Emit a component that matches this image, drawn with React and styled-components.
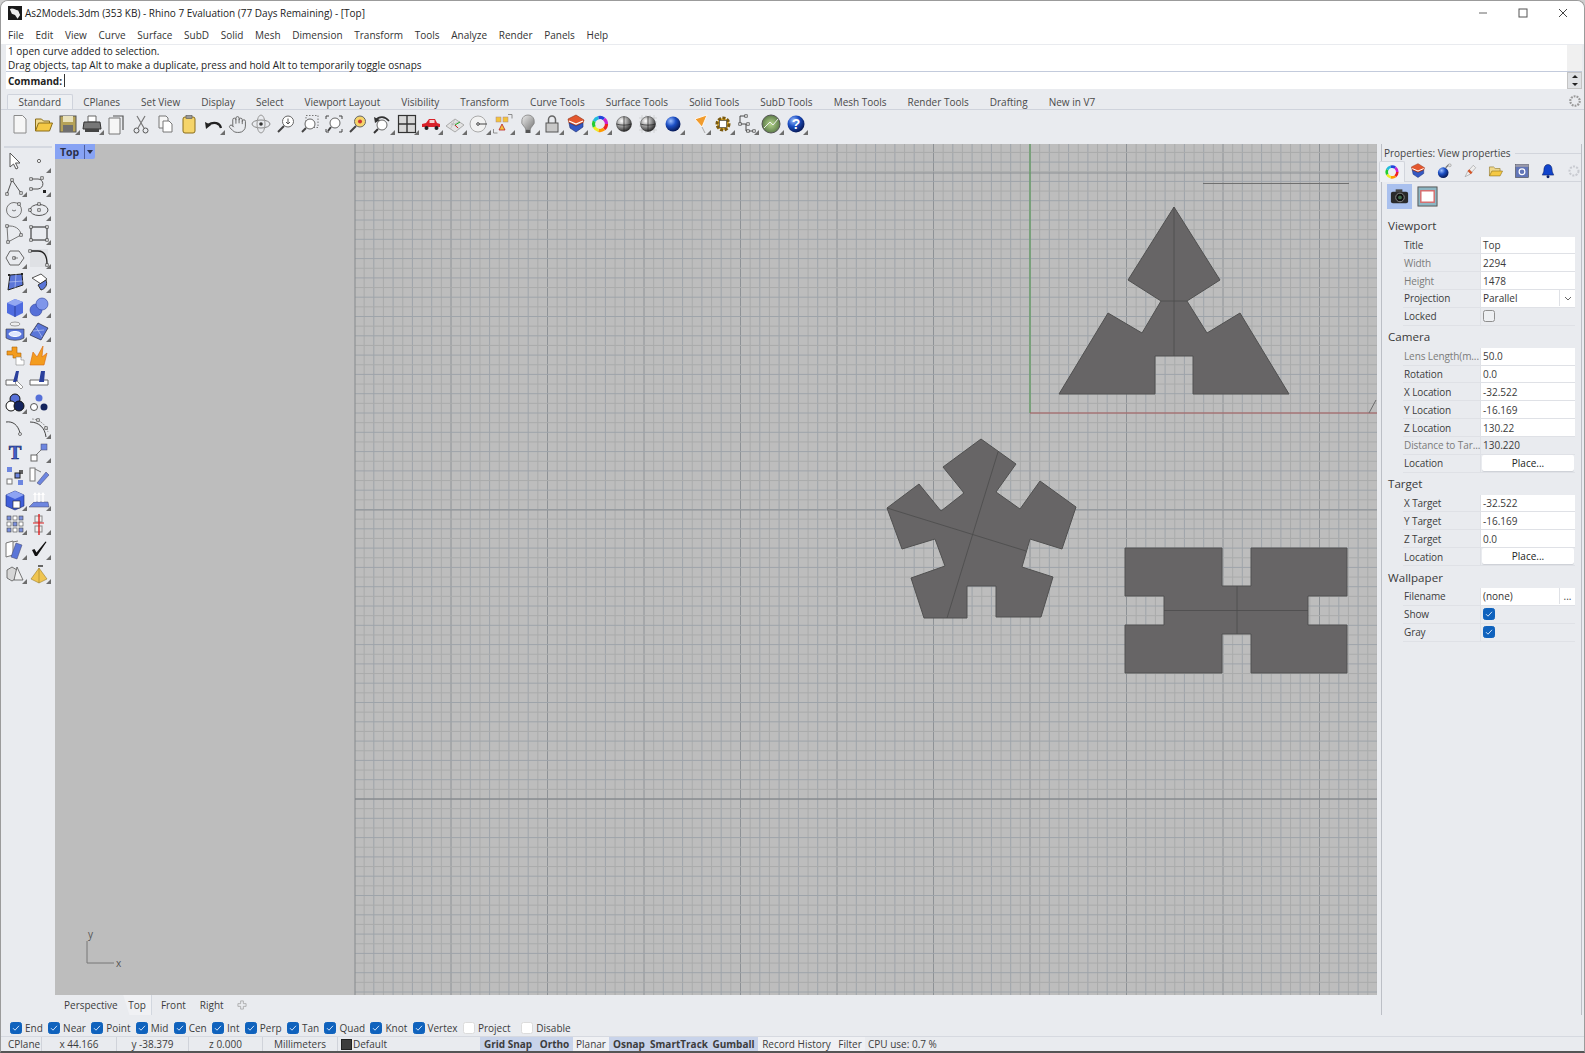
import React from 'react';
import styled, { createGlobalStyle } from 'styled-components';
import { Hand } from 'lucide-react';

const FONT = `"Open Sans", "Noto Sans", sans-serif`;

const Global = createGlobalStyle`
  html, body { margin: 0; padding: 0; background: #cfcfcf; overflow: hidden; }
  * { box-sizing: border-box; }
`;

const Window = styled.div`
  width: 1585px;
  height: 1053px;
  display: flex;
  flex-direction: column;
  background: #e9ebef;
  border: 1px solid #9b9b9b;
  border-bottom: 2px solid #555;
  border-top-right-radius: 8px;
  border-top-left-radius: 8px;
  overflow: hidden;
  font-family: ${FONT};
  font-size: 10px;
  color: #333;
`;

/* title + menu */
const TitleBar = styled.div`
  height: 25px;
  background: #fff;
  display: flex;
  align-items: center;
  padding: 0 0 2px 7px;
  gap: 3px;
  font-size: 10px;
  color: #222;
`;
const WinButtons = styled.div`
  margin-left: auto;
  display: flex;
  align-items: center;
  margin-right: 1px;
`;
const WinButton = styled.div`
  width: 40px;
  height: 23px;
  display: flex;
  align-items: center;
  justify-content: center;
`;
const MenuBar = styled.div`
  height: 18px;
  background: #fff;
  display: flex;
  align-items: center;
  padding-left: 7px;
  gap: 11.7px;
`;

/* command area */
const CommandArea = styled.div`
  margin-left: 5px;
  margin-top: 1px;
  display: grid;
  grid-template-columns: 1fr 15px;
  width: 1576px;
`;
const History = styled.div`
  height: 27px;
  background: #fff;
  border-bottom: 1px solid #c3cbdc;
  padding-left: 2px;
  line-height: 13.6px;
  color: #222;
`;
const ScrollTrack = styled.div`
  background: #f0f0f0;
  border-bottom: 1px solid #c3cbdc;
`;
const CommandLine = styled.div`
  height: 17px;
  background: #fff;
  padding-left: 2px;
  display: flex;
  align-items: center;
  gap: 2px;
  font-weight: 700;
  color: #222;
`;
const Caret = styled.span`
  width: 1px;
  height: 13px;
  background: #333;
`;
const Spinner = styled.div`
  height: 17px;
  background: #dfe1e4;
  display: grid;
  grid-template-rows: 1fr 1fr;
  justify-items: center;
  align-items: center;
  border: 1px solid #c4c4c4;
`;
const Arrow = styled.span`
  width: 0;
  height: 0;
  border-left: 3.5px solid transparent;
  border-right: 3.5px solid transparent;
  ${p => p.$up ? 'border-bottom: 3.5px solid #222;' : 'border-top: 3.5px solid #222;'}
`;

/* tabs and main toolbar */
const TabStrip = styled.div`
  margin-top: 4px;
  height: 17px;
  display: flex;
  padding: 1px 0 0 6px;
  border-bottom: 1px solid #cfd3dc;
  align-items: stretch;
  position: relative;
`;
const ToolTab = styled.div`
  padding: 0 10.5px;
  display: flex;
  align-items: center;
  color: #4a4a4a;
  ${p => p.$active && `
    background: #eef0f3;
    border: 1px solid #cfd3dc;
    border-bottom: none;
    border-radius: 2px 2px 0 0;
  `}
`;
const SettingsGear = styled.div`
  position: absolute;
  right: 1px;
  top: 0;
`;
const ToolRow = styled.div`
  height: 31px;
  padding: 0 0 3px 6.5px;
  display: flex;
  align-items: center;
`;
const Cell = styled.div`
  position: relative;
  width: 24.2px;
  height: 24px;
  flex: none;
  display: flex;
  align-items: center;
  justify-content: center;
  margin-left: ${p => p.$gap || 0}px;
`;
const Fly = styled.span`
  position: absolute;
  right: 0;
  bottom: 1px;
  width: 0;
  height: 0;
  border-left: 5px solid transparent;
  border-bottom: 5px solid #6d6d6d;
`;

/* body */
const Body = styled.div`
  margin-top: 3px;
  display: flex;
  height: 871px;
`;
const LeftBar = styled.div`
  width: 54px;
  flex: none;
  padding: 2px 2px 0 2px;
`;
const Grip = styled.div`
  height: 2px;
  margin: 0 1px 1.5px 1px;
  background: #d4d8e0;
`;
const LeftGrid = styled.div`
  display: grid;
  grid-template-columns: 24.2px 24.2px;
  grid-auto-rows: 24.2px;
`;
const Center = styled.div`
  width: 1322px;
  flex: none;
  display: flex;
  flex-direction: column;
`;
const ViewportBox = styled.div`
  position: relative;
  height: 851px;
  background: #bdbdbd;
`;
const ViewSvg = styled.svg`
  display: block;
  width: 1322px;
  height: 851px;
`;
const ViewTag = styled.div`
  position: absolute;
  left: 0;
  top: 0;
  width: 40px;
  height: 15px;
  background: #87a3f4;
  border-bottom-right-radius: 2px;
  display: grid;
  grid-template-columns: 30px 10px;
  align-items: center;
  font-weight: 700;
  font-size: 10.5px;
  color: #2a2f48;
`;
const TagName = styled.span`
  text-align: center;
  border-right: 1px solid #4d5f9e;
  line-height: 14px;
`;
const TagArrow = styled.span`
  justify-self: center;
  width: 0;
  height: 0;
  border-left: 3.5px solid transparent;
  border-right: 3.5px solid transparent;
  border-top: 4px solid #2a2f48;
`;
const ViewTabs = styled.div`
  height: 20px;
  display: flex;
  align-items: center;
  padding-left: 3.5px;
  color: #3c3c3c;
`;
const ViewTab = styled.div`
  height: 20px;
  display: flex;
  align-items: center;
  padding: 0 ${p => p.$pad || 5.5}px;
  ${p => p.$active && `
    background: #f0f1f4;
    clip-path: polygon(0 0, 100% 0, 100% 100%, 22% 100%);
    border-right: 1px solid #cfd3dc;
  `}
`;
const AddTab = styled.span`
  margin-left: 8px;
  display: flex;
`;

/* properties panel */
const Panel = styled.div`
  width: 201px;
  flex: none;
  margin-left: 4px;
  border-left: 1px solid #bcbfc6;
  border-right: 1px solid #bcbfc6;
  padding: 1px 0 0 2px;
`;
const PanelTitle = styled.div`
  height: 16px;
  display: flex;
  align-items: center;
  gap: 4px;
  color: #444;
`;
const TitleRule = styled.span`
  flex: 1;
  height: 1px;
  background: #d2d5dc;
`;
const PanelTabs = styled.div`
  height: 21px;
  display: flex;
  align-items: center;
  margin-left: -5px;
  border-bottom: 1px solid #d2d5dc;
`;
const PanelTab = styled.div`
  width: 26px;
  height: 21px;
  flex: none;
  display: flex;
  align-items: center;
  justify-content: center;
  ${p => p.$active && `
    background: #eef0f4;
    border: 1px solid #d2d5dc;
    border-bottom: none;
    border-radius: 2px 2px 0 0;
  `}
`;
const SubTabs = styled.div`
  height: 26px;
  margin-top: 1px;
  padding-left: 3px;
  display: flex;
  align-items: center;
  gap: 3px;
`;
const SubTab = styled.div`
  width: 25px;
  height: 25px;
  display: flex;
  align-items: center;
  justify-content: center;
  background: ${p => p.$active ? '#a9c0ee' : 'transparent'};
`;
const Heading = styled.div`
  height: 22px;
  margin-left: 4px;
  display: flex;
  align-items: center;
  font-size: 11.6px;
  color: #3a3a3a;
  ${p => p.$first && 'margin-top: 5.5px;'}
`;
const Row = styled.div`
  height: 17.85px;
  margin-left: 19px;
  width: 172px;
  display: grid;
  grid-template-columns: 78px 94px;
  border-bottom: 1px solid #dfe1e6;
`;
const Label = styled.div`
  display: flex;
  align-items: center;
  padding-left: 1px;
  white-space: nowrap;
  letter-spacing: -0.1px;
  color: ${p => p.$dim ? '#7b7b7b' : '#3c3c3c'};
  border-right: 1px solid #dfe1e6;
`;
const Value = styled.div`
  display: flex;
  align-items: center;
  padding-left: 2px;
  color: #3a3a3a;
  background: ${p => p.$plain ? 'transparent' : '#fff'};
`;
const PlaceButton = styled.div`
  background: #fff;
  border-radius: 2px;
  display: flex;
  align-items: center;
  justify-content: center;
  color: #222;
  margin: 0 1px 1px 1px;
  box-shadow: 0 1px 0 #cfd2d8;
`;
const PickField = styled.div`
  display: grid;
  grid-template-columns: 1fr 16px;
  background: #fff;
  align-items: center;
  padding-left: 2px;
`;
const PickButton = styled.div`
  height: 16px;
  border-left: 1px solid #dfe1e6;
  display: flex;
  align-items: center;
  justify-content: center;
  color: #444;
`;
const Box = styled.span`
  width: 12px;
  height: 12px;
  flex: none;
  border-radius: 2.5px;
  display: inline-flex;
  align-items: center;
  justify-content: center;
  background: ${p => p.$on ? '#0f62bd' : p.$white ? '#fff' : '#eef0f3'};
  border: 1px solid ${p => p.$on ? '#0f62bd' : p.$white ? '#dcdcdc' : '#8f8f8f'};
`;

/* bottom */
const OsnapRow = styled.div`
  height: 21px;
  padding: 4px 0 0 9px;
  display: flex;
  align-items: center;
  gap: 5.3px;
  color: #3c3c3c;
`;
const OsnapItem = styled.label`
  display: flex;
  align-items: center;
  gap: 3px;
  margin-left: ${p => p.$gap || 0}px;
`;
const StatusBar = styled.div`
  height: 15px;
  display: flex;
  padding-left: 4px;
  border-top: 1px solid #d6d9e0;
  color: #3c3c3c;
`;
const StatusCell = styled.div`
  width: ${p => p.$w}px;
  flex: none;
  display: flex;
  align-items: center;
  justify-content: ${p => p.$left ? 'flex-start' : 'center'};
  gap: 1px;
  white-space: nowrap;
  padding-left: ${p => p.$left ? 3 : 0}px;
  border-right: ${p => p.$line ? '1px solid #d0d3da' : 'none'};
  font-weight: ${p => p.$on ? 700 : 400};
  background: ${p => p.$on ? '#c8d3ea' : p.$off ? '#f0f1f4' : 'transparent'};
`;
const Swatch = styled.span`
  width: 11px;
  height: 11px;
  background: #3d3d3d;
  border: 1px solid #222;
`;

const Svg = ({ children, s = 22, vb = 22 }) => (
  <svg width={s} height={s} viewBox={`0 0 ${vb} ${vb}`} fill="none">{children}</svg>
);

const Defs = () => (
  <svg width="0" height="0" style={{ position: 'absolute' }}>
    <defs>
      <radialGradient id="ball" cx="35%" cy="30%" r="75%">
        <stop offset="0" stopColor="#fff" /><stop offset=".5" stopColor="#999" /><stop offset="1" stopColor="#222" />
      </radialGradient>
      <radialGradient id="blue" cx="35%" cy="30%" r="75%">
        <stop offset="0" stopColor="#9fc0ff" /><stop offset=".45" stopColor="#1c4fc4" /><stop offset="1" stopColor="#06154e" />
      </radialGradient>
      <radialGradient id="green" cx="50%" cy="50%" r="60%">
        <stop offset="0" stopColor="#b6d68e" /><stop offset="1" stopColor="#4c6a3c" />
      </radialGradient>
      <linearGradient id="bulb" x1="0" x2="1" y1="0" y2="1">
        <stop offset="0" stopColor="#eee" /><stop offset="1" stopColor="#777" />
      </linearGradient>
    </defs>
  </svg>
);

const P = ({ x, y }) => <rect x={x - 1.2} y={y - 1.2} width="2.4" height="2.4" fill="#fff" stroke="#333" strokeWidth=".7" />;
const Wheel = () => (
  <>
    {['#e22', '#f90', '#ee2', '#2c3', '#2bd', '#24d', '#c2c'].map((c, i) => {
      const a = i * 2 * Math.PI / 7, b = (i + 1) * 2 * Math.PI / 7;
      return <path key={c} d={`M${11 + 6.5 * Math.cos(a)} ${11 + 6.5 * Math.sin(a)}A6.5 6.5 0 0 1 ${11 + 6.5 * Math.cos(b)} ${11 + 6.5 * Math.sin(b)}`} stroke={c} strokeWidth="3.2" />;
    })}
  </>
);
const Layers = () => (
  <>
    <path d="M3 6l8-4 8 5-1 3-7 3-7-3z" fill="#e4572e" stroke="#8c2d12" strokeWidth=".6" />
    <path d="M4 10l7 3 7-3v4l-7 5-6-4z" fill="#3558c4" stroke="#1d2f70" strokeWidth=".6" />
    <path d="M4 8l7 3 7-3" stroke="#fff" strokeWidth="1.2" />
  </>
);
const Seams = () => <path d="M3.500 11c4 1.500 11 1.500 15 0M11 3.500v15" stroke="#222" strokeWidth=".7" />;

const ICONS = {
  newDoc: <path d="M5 2.5h8.5l3.5 3.5v14H5z" fill="#f6f6f6" stroke="#8a8a8a" />,
  open: <><path d="M2.5 18V6h6l2 2h6v3" fill="#f0d98c" stroke="#8a6d1a" /><path d="M2.5 18l3-8h14l-3 8z" fill="#f5c945" stroke="#8a6d1a" /></>,
  save: <><rect x="3" y="3" width="16" height="16" fill="#b5a258" stroke="#555" /><rect x="6" y="3" width="10" height="6" fill="#e9e2bd" /><rect x="6" y="12" width="10" height="7" fill="#6f6f6f" /></>,
  print: <><path d="M7 3h8v6H7z" fill="#fff" stroke="#666" /><path d="M3 9h16l1 7H2z" fill="#777" stroke="#333" /><rect x="4" y="16" width="14" height="3" fill="#444" /></>,
  pages: <><path d="M8 3h10v14" stroke="#555" strokeWidth="1.2" /><path d="M4 5h11v16H4z" fill="#f6f6f6" stroke="#777" /></>,
  cut: <><path d="M7 3l7 12M15 3L8 15" stroke="#777" strokeWidth="1.2" /><circle cx="6.5" cy="17.5" r="2.5" stroke="#555" /><circle cx="15.5" cy="17.5" r="2.5" stroke="#555" /></>,
  copy: <><path d="M5 3h7l2 2v10H5z" fill="#f6f6f6" stroke="#777" /><path d="M9 8h6l3 3v8H9z" fill="#fff" stroke="#777" /></>,
  paste: <><rect x="5" y="4" width="12" height="16" rx="2" fill="#f5d46a" stroke="#8a6d1a" /><rect x="8" y="2.5" width="6" height="3" fill="#999" stroke="#555" strokeWidth=".6" /></>,
  undo: <><path d="M19 15c-1-5-7-7-13-3" stroke="#222" strokeWidth="2.2" /><path d="M3 9l1 7 5-4z" fill="#222" /></>,
  hand: null,
  rotate: <><ellipse cx="11" cy="11" rx="9" ry="4" stroke="#888" /><ellipse cx="11" cy="11" rx="4" ry="9" stroke="#999" /><circle cx="11" cy="11" r="1.8" fill="#333" /></>,
  zoom: <><circle cx="13" cy="8.5" r="5.5" fill="#fff" stroke="#666" /><path d="M9 13l-6 6" stroke="#444" strokeWidth="2" /><path d="M13 5.5v5M11 9l2 2 2-2" stroke="#555" /></>,
  zoomWin: <><rect x="7" y="2.5" width="12" height="12" stroke="#777" strokeDasharray="1.5 1.5" /><circle cx="11" cy="11" r="5" fill="#fff" stroke="#666" /><path d="M7 15l-4 4" stroke="#444" strokeWidth="2" /></>,
  zoomExt: <><path d="M3 6V3h3M16 3h3v3M3 16v3h3M16 19h3v-3" stroke="#444" /><circle cx="12" cy="10" r="5" fill="#fff" stroke="#666" /><path d="M8 14l-3 4" stroke="#444" strokeWidth="2" /></>,
  zoomSel: <><circle cx="13" cy="8.5" r="5.5" fill="#f5d46a" stroke="#666" /><circle cx="13" cy="8.5" r="2" fill="#c33" /><path d="M9 13l-6 6" stroke="#444" strokeWidth="2" /></>,
  zoomBack: <><circle cx="11" cy="12" r="5" fill="#fff" stroke="#666" /><path d="M7 16l-4 4" stroke="#333" strokeWidth="2" /><path d="M5 7c3-4 9-4 13 1" stroke="#333" strokeWidth="1.6" /><path d="M3 4l1 6 5-3z" fill="#333" /></>,
  views: <><rect x="2.5" y="2.5" width="17" height="17" fill="#d8d8d8" stroke="#333" strokeWidth="1.2" /><path d="M11 2.5v17M2.5 11h17" stroke="#333" strokeWidth="1.4" /></>,
  car: <><path d="M2 14v-3l4-1 3-4h6l2 4 3 1v3z" fill="#d8222a" /><rect x="9.5" y="7" width="5" height="3" fill="#f4d0d0" /><circle cx="6.5" cy="15" r="2" fill="#222" /><circle cx="16.5" cy="15" r="2" fill="#222" /></>,
  plane: <><path d="M2 13l9-7 9 6-9 7z" fill="#e3e3e3" stroke="#aaa" /><path d="M6.5 9.5l9 6.5M11 6l-4.500 10M15.500 9l-9 3" stroke="#b5b5b5" strokeWidth=".7" /><path d="M11 12l5-3" stroke="#2a2" /><path d="M11 12l3 3" stroke="#c22" /></>,
  clock: <><circle cx="10" cy="11" r="8" fill="#f2f2f2" stroke="#aaa" /><circle cx="10" cy="11" r="1.3" stroke="#444" /><path d="M11 11h8" stroke="#444" /></>,
  group: <><rect x="4" y="4" width="5" height="5" fill="#f3c33c" stroke="#a88" strokeWidth=".5" /><rect x="11" y="4" width="5" height="5" fill="#f3c33c" stroke="#a88" strokeWidth=".5" /><path d="M10 11l3 6H7z" fill="#f3c33c" stroke="#b22" strokeWidth=".8" /><path d="M1.500 16v4h4M16 1.500h4v4" stroke="#777" strokeWidth=".8" /></>,
  bulb: <><path d="M11 2a6.500 6.500 0 0 0-4 11.500c1 1 1.500 2 1.500 3h5c0-1 .5-2 1.500-3A6.500 6.500 0 0 0 11 2z" fill="url(#bulb)" stroke="#777" strokeWidth=".7" /><rect x="8.500" y="17" width="5" height="3" fill="#555" /></>,
  lock: <><path d="M7.500 10V6.500a3.500 3.500 0 0 1 7 0V10" stroke="#666" strokeWidth="1.5" /><rect x="5" y="10" width="12" height="9" fill="#c8c8c8" stroke="#555" /></>,
  layers: <Layers />,
  wheel: <Wheel />,
  ball: <><circle cx="11" cy="11" r="7.500" fill="url(#ball)" stroke="#333" strokeWidth=".5" /><Seams /></>,
  ballGrid: <><path d="M2 5h18M2 9h18M2 13h18M2 17h18M5 2v18M9 2v18M13 2v18M17 2v18" stroke="#bbb" strokeWidth=".5" /><circle cx="11" cy="11" r="7.500" fill="url(#ball)" stroke="#333" strokeWidth=".5" /><Seams /></>,
  ballBlue: <circle cx="11" cy="11" r="7.500" fill="url(#blue)" />,
  filter: <><path d="M7 6l12-4-5 12z" fill="#f19b2c" stroke="#fff" strokeWidth=".8" /><path d="M14 14l3 6" stroke="#aaa" /></>,
  gear: <><circle cx="11" cy="11" r="6" fill="#e2ad2a" stroke="#7a5a10" strokeDasharray="3 1.500" strokeWidth="3" /><rect x="7.500" y="7.500" width="7" height="7" fill="#fff" stroke="#444" strokeWidth=".7" /></>,
  tree: <><path d="M4 3v8h6v7h8M4 3h6" stroke="#222" strokeWidth=".8" /><P x={10} y={3} /><P x={4} y={11} /><P x={12} y={11} /><P x={12} y={18} /><P x={18} y={18} /></>,
  globe: <><circle cx="11" cy="11" r="9" fill="url(#green)" stroke="#555" /><path d="M4 15l6-6 3 3 5-6" stroke="#eee" /></>,
  help: <><circle cx="11" cy="11" r="8.500" fill="url(#blue)" /><text x="11" y="16" fontFamily="Liberation Sans, sans-serif" fontWeight="700" fontSize="14" fill="#fff" textAnchor="middle">?</text></>,

  arrow: <path d="M6 2v14l3.500-3 2.500 5 2-1-2.500-5h4.500z" fill="#fff" stroke="#555" />,
  point: <circle cx="11" cy="10" r="1.600" fill="#fff" stroke="#666" />,
  poly: <><path d="M3 19l5-14 9 13" stroke="#555" /><P x={3} y={19} /><P x={8} y={5} /><P x={17} y={18} /></>,
  curve: <><path d="M3 4h7c6 0 7 9 0 10H3" stroke="#555" /><P x={3} y={4} /><P x={14} y={3} /><P x={3} y={14} /><rect x="15" y="15" width="3" height="3" fill="#222" /></>,
  circle: <><circle cx="10" cy="11" r="7.500" stroke="#777" /><P x={15} y={5} /><path d="M8 11l2 1 2-1" stroke="#444" strokeWidth=".7" /></>,
  ellipse: <><ellipse cx="11" cy="11" rx="9" ry="5.500" stroke="#555" /><P x={11} y={5} /><P x={11} y={11} /><P x={2} y={11} /></>,
  arc: <><path d="M3 3h3c7 0 11 5 11 9L4 19z" stroke="#777" /><P x={3} y={3} /><P x={17} y={12} /><P x={4} y={19} /></>,
  rect: <><rect x="3" y="4" width="16" height="13" stroke="#222" /><P x={3} y={4} /><P x={19} y={4} /><P x={3} y={17} /><P x={19} y={17} /></>,
  polygon: <><path d="M6 4h9l5 7-5 7H6l-4-7z" stroke="#666" /><P x={10} y={11} /><path d="M10 11h4" stroke="#555" strokeWidth=".7" /></>,
  fillet: <><rect x="2" y="2" width="18" height="18" fill="#dfe1e5" /><path d="M2 4h8c6 0 9 5 9 13" stroke="#222" strokeWidth="1.300" /><P x={2} y={4} /><P x={19} y={18} /></>,
  surface: <><path d="M6 4l12-1 1 11-15 5z" fill="#5b76d8" stroke="#222" /><path d="M5 11l14-1M12 3l-1 14" stroke="#c7d2f5" strokeWidth=".6" /><rect x="4" y="3" width="2" height="2" fill="#222" /><rect x="17" y="2" width="2" height="2" fill="#222" /></>,
  edge: <><path d="M4 7l9-4 6 5-6 5z" fill="#fff" stroke="#555" /><path d="M10 14l8-5c2 5-1 9-5 10z" fill="#5b76d8" stroke="#333" /></>,
  box: <><path d="M3 7l8-4 8 3v11l-8 4-8-4z" fill="#4f6ce0" /><path d="M3 7l8 3 8-4-8-3z" fill="#93a8f2" /><path d="M11 10v11" stroke="#2a3f9c" /></>,
  spheres: <><circle cx="8" cy="14" r="6" fill="#5670d8" stroke="#2a3f9c" strokeWidth=".6" /><circle cx="14" cy="8" r="6" fill="#7f96ea" stroke="#2a3f9c" strokeWidth=".6" /></>,
  cylinder: <><ellipse cx="11" cy="4" rx="5" ry="2" fill="#eee" stroke="#666" strokeWidth=".6" /><path d="M2 9h18v9c-5 3-13 3-18 0z" fill="#5b76d8" stroke="#333" strokeWidth=".6" /><ellipse cx="11" cy="14" rx="6" ry="2.500" fill="#dfe6ff" stroke="#fff" /></>,
  plate: <><path d="M2 15L10 3l10 5-7 12z" fill="#5b76d8" stroke="#223" strokeWidth=".7" /><path d="M5 11l11-1M8 7l6 10" stroke="#c7d2f5" strokeWidth=".6" /></>,
  puzzle: <><path d="M3 7h5V3h5v6h4v5H9v-3H3z" fill="#f39c1f" stroke="#a8610a" strokeWidth=".6" /><path d="M12 13h5v3h3v5h-8z" fill="#fff" stroke="#888" strokeWidth=".6" /></>,
  flame: <path d="M2 21L5 8l4 5 6-11-1 11 5-4-3 12z" fill="#f39c1f" stroke="#d9640a" strokeWidth=".6" />,
  split: <><path d="M2 12h11v5H2z" fill="#fff" stroke="#666" /><path d="M12 3h3l-2 11h-4z" fill="#2a3f9c" /><path d="M13 13l6 6-2 2-6-6z" fill="#fff" stroke="#999" /></>,
  trim: <><path d="M2 12h18v5H2z" fill="#fff" stroke="#666" /><path d="M13 3h4l-1 11h-5z" fill="#2a3f9c" /></>,
  bool: <><circle cx="11" cy="7" r="5" fill="#5670d8" stroke="#111" /><circle cx="7" cy="14" r="5" fill="#fff" stroke="#111" /><circle cx="15" cy="14" r="5" fill="#14245e" stroke="#111" /></>,
  dots: <><circle cx="11" cy="6" r="3.500" fill="#5670d8" /><circle cx="6" cy="15" r="3.500" fill="#fff" stroke="#555" /><circle cx="16" cy="15" r="3.500" fill="#14245e" /></>,
  bend: <><path d="M2 5c7-1 12 3 14 11" stroke="#444" /><circle cx="16" cy="17" r="1.500" stroke="#777" /></>,
  bend2: <><path d="M2 5c9 0 15 6 16 15" stroke="#444" /><path d="M4 2c6 0 14 5 16 13" stroke="#999" strokeDasharray="2 1" /><P x={10} y={3} /><P x={18} y={11} /></>,
  text: <text x="11" y="18" fontFamily="Liberation Serif, serif" fontWeight="700" fontSize="19" fill="#4361cf" stroke="#14245e" strokeWidth=".6" textAnchor="middle">T</text>,
  scale: <><path d="M7 15l7-7" stroke="#777" /><rect x="13" y="3" width="6" height="6" fill="#6d86e0" stroke="#446" strokeWidth=".5" /><rect x="3" y="14" width="6" height="6" fill="#fff" stroke="#666" /></>,
  squares: <><rect x="3" y="2" width="5" height="5" fill="#6d86e0" /><rect x="3" y="14" width="5" height="5" fill="#fff" stroke="#777" /><rect x="11" y="8" width="5" height="5" fill="#6d86e0" stroke="#222" /><rect x="15" y="5" width="4" height="4" fill="#222" opacity=".7" /><rect x="14" y="15" width="5" height="5" fill="#6d86e0" /></>,
  mirror: <><rect x="2" y="3" width="5" height="13" fill="#fff" stroke="#777" /><path d="M9 18L18 7l3 3-9 10z" fill="#6d86e0" stroke="#446" strokeWidth=".5" /><path d="M7 4l6 3" stroke="#777" /></>,
  solidBox: <><path d="M2 6l9-4 9 4v11l-9 4-9-4z" fill="#3f5ed9" stroke="#1a2a70" strokeWidth=".6" /><path d="M2 6l9 4 9-4-9-4z" fill="#8da3f2" /><rect x="9" y="12" width="7" height="7" fill="#fff" stroke="#222" strokeWidth=".6" /></>,
  lift: <><path d="M1 18l5-5h14l1 5z" fill="#6d86e0" stroke="#446" strokeWidth=".5" /><path d="M7 13V4M11 13V4M15 13V4" stroke="#fff" strokeWidth="1.400" /><path d="M5 6l2-3 2 3M9 6l2-3 2 3M13 6l2-3 2 3" fill="#fff" /></>,
  array: <>{[3, 9, 15].flatMap(x => [3, 9, 15].map(y => <rect key={`${x}-${y}`} x={x} y={y} width="4" height="4" fill={(x + y) % 4 ? '#7b90dd' : '#fff'} stroke="#444" strokeWidth=".6" />))}</>,
  section: <><rect x="7" y="3" width="7" height="6" fill="#eee" stroke="#888" /><rect x="7" y="13" width="7" height="6" fill="#eee" stroke="#888" /><path d="M11 1v21" stroke="#d22" strokeWidth="1.400" /><path d="M5 10h11" stroke="#d22" /></>,
  wallet: <><path d="M2 5l7-2v14l-7 2z" fill="#fff" stroke="#777" /><path d="M7 19l5-14 6 2-5 14z" fill="#5b76d8" stroke="#446" strokeWidth=".5" /><path d="M9 4l5-1" stroke="#777" /></>,
  check: <path d="M4 12l2.500-1 2 3.500 9-11 1 .5-9.500 14h-2z" fill="#111" />,
  shapes: <><path d="M3 8l5-3 5 3v8l-5 3-5-3z" fill="#d6d6d6" stroke="#444" strokeWidth=".7" /><path d="M13 5l6 13h-9z" fill="#efefef" stroke="#444" strokeWidth=".7" /></>,
  pyramid: <><path d="M11 6l8 11-8 4-8-4z" fill="#efc552" stroke="#8a6d1a" strokeWidth=".5" /><path d="M11 6v15" stroke="#8a6d1a" strokeWidth=".5" /><path d="M10 3h5v2h-5z" fill="#666" /></>,

  colorTab: <Wheel />,
  layerTab: <Layers />,
  bomb: <><circle cx="10" cy="13" r="6.500" fill="url(#blue)" /><path d="M13 7l4-4" stroke="#777" strokeWidth="1.500" /><circle cx="18" cy="4" r="1.800" fill="#ddd" stroke="#777" strokeWidth=".5" /></>,
  pen: <><path d="M5 18l3-6 7-8 3 3-7 8z" fill="#eee" stroke="#888" strokeWidth=".6" /><path d="M9 10l4 4" stroke="#d2562a" strokeWidth="3" /></>,
  folder: <><path d="M3 17V6h5l2 2h6v3" fill="#f0d98c" stroke="#8a6d1a" strokeWidth=".7" /><path d="M3 17l3-6h13l-3 6z" fill="#f5c945" stroke="#8a6d1a" strokeWidth=".7" /></>,
  docTab: <><rect x="3" y="3" width="16" height="16" fill="#6175b8" stroke="#444" strokeWidth=".7" /><rect x="3" y="3" width="16" height="3" fill="#99a" /><circle cx="11" cy="12" r="3.500" stroke="#fff" strokeWidth="1.500" /></>,
  bell: <><path d="M11 3c-4 0-5 4-5 7 0 3-2 5-2 6h14c0-1-2-3-2-6 0-3-1-7-5-7z" fill="#1144cc" stroke="#0a1f66" strokeWidth=".7" /><circle cx="11" cy="18" r="1.800" fill="#0a1f66" /></>,
  gearTab: <circle cx="11" cy="11" r="5.500" stroke="#c8cad0" strokeWidth="2.500" strokeDasharray="2.500 1.500" />,
  camera: <><rect x="2" y="6" width="18" height="12" rx="2" fill="#2a2a2a" /><rect x="7" y="3.500" width="7" height="3" fill="#444" /><circle cx="11.500" cy="12" r="4.500" fill="#111" stroke="#888" /><circle cx="11.500" cy="12" r="2" fill="#3f6b4a" /></>,
  frame: <><rect x="1" y="1" width="20" height="20" fill="#8eb7c4" stroke="#555" /><rect x="4" y="5" width="14" height="12" fill="#fff" stroke="#d76b6b" strokeWidth="1.500" /></>,
  rhino: <><rect x="0" y="0" width="22" height="22" fill="#1a1a1a" /><path d="M3 5c4-3 8 1 13 2l3 7-4 6-4-6-5-2z" fill="#eee" /></>,
};

const Icon = ({ k, s = 22 }) => {
  if (k === 'hand') return <Hand size={19} strokeWidth={1.2} color="#666" />;
  return <Svg s={s}>{ICONS[k]}</Svg>;
};

const MENUS = ['File', 'Edit', 'View', 'Curve', 'Surface', 'SubD', 'Solid', 'Mesh', 'Dimension', 'Transform', 'Tools', 'Analyze', 'Render', 'Panels', 'Help'];
const TABS = ['Standard', 'CPlanes', 'Set View', 'Display', 'Select', 'Viewport Layout', 'Visibility', 'Transform', 'Curve Tools', 'Surface Tools', 'Solid Tools', 'SubD Tools', 'Mesh Tools', 'Render Tools', 'Drafting', 'New in V7'];

// key, flyout marker, extra gap
const TOP_TOOLS = [
  ['newDoc'], ['open'], ['save', 1], ['print', 1], ['pages'], ['cut'], ['copy'], ['paste'], ['undo', 1], ['hand'], ['rotate'],
  ['zoom'], ['zoomWin'], ['zoomExt'], ['zoomSel'], ['zoomBack', 1], ['views', 1], ['car', 1], ['plane', 1], ['clock', 1], ['group', 1],
  ['bulb', 1], ['lock', 1], ['layers', 1], ['wheel', 1], ['ball'], ['ballGrid'], ['ballBlue', 1], ['filter', 1, 2], ['gear', 1], ['tree', 1], ['globe', 1], ['help', 1],
];

const LEFT_TOOLS = [
  ['arrow'], ['point', 1], ['poly', 1], ['curve', 1], ['circle', 1], ['ellipse', 1], ['arc'], ['rect', 1], ['polygon', 1], ['fillet', 1],
  ['surface', 1], ['edge', 1], ['box', 1], ['spheres', 1], ['cylinder', 1], ['plate', 1], ['puzzle'], ['flame'], ['split'], ['trim'],
  ['bool', 1], ['dots'], ['bend'], ['bend2', 1], ['text'], ['scale', 1], ['squares'], ['mirror'], ['solidBox', 1], ['lift', 1],
  ['array', 1], ['section', 1], ['wallet', 1], ['check', 1], ['shapes', 1], ['pyramid', 1],
];

const PANEL_TABS = ['colorTab', 'layerTab', 'bomb', 'pen', 'folder', 'docTab', 'bell', 'gearTab'];

const OSNAPS = [['End', 1], ['Near', 1], ['Point', 1], ['Mid', 1], ['Cen', 1], ['Int', 1], ['Perp', 1], ['Tan', 1], ['Quad', 1], ['Knot', 1], ['Vertex', 1], ['Project', 0, 0], ['Disable', 0, 5.5]];

const STATUS = [
  { t: 'CPlane', w: 37, line: 1, left: 1 }, { t: 'x 44.166', w: 75, line: 1 }, { t: 'y -38.379', w: 72, line: 1 }, { t: 'z 0.000', w: 74, line: 1 }, { t: 'Millimeters', w: 75, line: 1 },
];
const TOGGLES = [
  { t: 'Grid Snap', w: 56, on: 1 }, { t: 'Ortho', w: 37, on: 1 }, { t: 'Planar', w: 36, off: 1 }, { t: 'Osnap', w: 40, on: 1 }, { t: 'SmartTrack', w: 60, on: 1 }, { t: 'Gumball', w: 49, on: 1 },
  { t: 'Record History', w: 77, off: 1 }, { t: 'Filter', w: 30, off: 1 },
];

const FLAT = '#676566';
const EDGE = '#505050';
const pts = a => a.map(p => p.join(',')).join(' ');

const TRI = [[1174, 207], [1220, 280], [1187, 301], [1207, 333], [1240, 313], [1289, 394], [1193, 394], [1193, 356], [1155, 356], [1155, 394], [1059, 394], [1108, 313], [1142, 333], [1161, 301], [1128, 280]];
const PENTA = [[981, 439], [1016, 464], [996, 492], [1020, 509], [1040, 481], [1076, 507], [1062, 549], [1030, 539], [1022, 567], [1053, 577], [1041, 617], [996, 617], [996, 586], [967, 586], [967, 618], [924, 618], [911, 578], [945, 566], [935, 539], [902, 549], [887, 508], [919, 484], [941, 511], [964, 493], [943, 467]];
const CROSS = [[1125, 548], [1222, 548], [1222, 586], [1251, 586], [1251, 548], [1347, 548], [1347, 596], [1308, 596], [1308, 625], [1347, 625], [1347, 673], [1251, 673], [1251, 634], [1222, 634], [1222, 673], [1125, 673], [1125, 625], [1164, 625], [1164, 596], [1125, 596]];
const FOLDS = [
  [1174, 207, 1174, 356], [1161, 301, 1187, 301], [998, 452, 947, 618], [887, 508, 1026, 551], [1164, 610.5, 1308, 610.5], [1237, 586, 1237, 634],
];

const OX = 1030, OY = 413, STEP = 9.65;
const gridColor = k => (k % 10 === 0 ? '#8e9296' : k % 2 === 0 ? '#9ea4aa' : '#aaacac');
const rowColor = k => (k % 2 === 0 ? '#9ea4aa' : '#aaacac');
const verticals = [];
for (let k = -70; k <= 36; k++) verticals.push(k);
const horizontals = [];
for (let k = -28; k <= 60; k++) horizontals.push(k);

const Scene = () => (
  <ViewSvg viewBox="55 144 1322 851" fill="none">
    {verticals.map(k => {
      const x = OX + k * STEP;
      return x >= 355 && <line key={k} x1={x} x2={x} y1="144" y2="995" stroke={gridColor(k)} strokeWidth="1" />;
    })}
    {horizontals.map(k => {
      const y = OY + k * STEP;
      return <line key={k} x1="355" x2="1377" y1={y} y2={y} stroke={rowColor(k)} strokeWidth="1" />;
    })}
    <line x1="355" x2="355" y1="144" y2="995" stroke="#85898c" />
    <line x1="355" x2="1377" y1="173" y2="173" stroke="#8e9296" />
    <line x1="355" x2="1377" y1="510" y2="510" stroke="#8e9296" />
    <line x1="355" x2="1377" y1="799" y2="799" stroke="#7c7f82" />
    <line x1="1030" x2="1030" y1="144" y2="413" stroke="#4f9a4f" />
    <line x1="1030" x2="1377" y1="413" y2="413" stroke="#a85a5a" />
    <path d="M1369 413l7-13" stroke="#6c6c6c" />
    <line x1="1203" x2="1349" y1="183.500" y2="183.500" stroke="#6f6f6f" />
    {[TRI, PENTA, CROSS].map((s, i) => <polygon key={i} points={pts(s)} fill={FLAT} stroke={EDGE} strokeWidth="1" />)}
    {FOLDS.map((l, i) => <line key={i} x1={l[0]} y1={l[1]} x2={l[2]} y2={l[3]} stroke="#4b4b4b" strokeWidth=".8" />)}
    <path d="M87 941v22h27" stroke="#777" />
    <text x="88" y="938" fontSize="10" fontFamily={FONT} fill="#555">y</text>
    <text x="116" y="967" fontSize="10" fontFamily={FONT} fill="#555">x</text>
  </ViewSvg>
);

const Tick = ({ white }) => (
  <svg width="8" height="8" viewBox="0 0 8 8" fill="none"><path d="M1 4.200l2 2 4-4.400" stroke={white ? '#cfe2fa' : '#333'} strokeWidth="1" /></svg>
);
const Check = ({ on, white }) => <Box $on={on} $white={white}>{on ? <Tick white /> : null}</Box>;

const PropRow = ({ label, value, dim, plain }) => (
  <Row>
    <Label $dim={dim}>{label}</Label>
    <Value $plain={plain}>{value}</Value>
  </Row>
);

const App = () => (
  <Window>
    <Global />
    <Defs />
    <TitleBar>
      <Icon k="rhino" s={14} />
      <span>As2Models.3dm (353 KB) - Rhino 7 Evaluation (77 Days Remaining) - [Top]</span>
      <WinButtons>
        <WinButton><svg width="10" height="2"><path d="M1 1h8" stroke="#666" /></svg></WinButton>
        <WinButton><svg width="10" height="10"><rect x="1" y="1" width="8" height="8" fill="none" stroke="#555" /></svg></WinButton>
        <WinButton><svg width="10" height="10"><path d="M1 1l8 8M9 1l-8 8" stroke="#444" /></svg></WinButton>
      </WinButtons>
    </TitleBar>
    <MenuBar>{MENUS.map(m => <span key={m}>{m}</span>)}</MenuBar>
    <CommandArea>
      <History>
        1 open curve added to selection.<br />
        Drag objects, tap Alt to make a duplicate, press and hold Alt to temporarily toggle osnaps
      </History>
      <ScrollTrack />
      <CommandLine>Command:<Caret /></CommandLine>
      <Spinner><Arrow $up /><Arrow /></Spinner>
    </CommandArea>
    <TabStrip>
      {TABS.map((t, i) => <ToolTab key={t} $active={i === 0}>{t}</ToolTab>)}
      <SettingsGear><Svg s={16}><circle cx="11" cy="11" r="6.500" stroke="#9a9a9a" strokeWidth="3" strokeDasharray="2.500 1.500" /></Svg></SettingsGear>
    </TabStrip>
    <ToolRow>
      {TOP_TOOLS.map(([k, fly, gap]) => (
        <Cell key={k} $gap={gap}><Icon k={k} />{fly ? <Fly /> : null}</Cell>
      ))}
    </ToolRow>
    <Body>
      <LeftBar>
        <Grip />
        <LeftGrid>
          {LEFT_TOOLS.map(([k, fly]) => (
            <Cell key={k}><Icon k={k} />{fly ? <Fly /> : null}</Cell>
          ))}
        </LeftGrid>
      </LeftBar>
      <Center>
        <ViewportBox>
          <Scene />
          <ViewTag><TagName>Top</TagName><TagArrow /></ViewTag>
        </ViewportBox>
        <ViewTabs>
          <ViewTab>Perspective</ViewTab>
          <ViewTab $active $pad={5}>Top</ViewTab>
          <ViewTab $pad={9}>Front</ViewTab>
          <ViewTab $pad={5}>Right</ViewTab>
          <AddTab><Svg s={10}><path d="M8 2h6v6h6v6h-6v6H8v-6H2V8h6z" stroke="#999" strokeWidth="1.500" /></Svg></AddTab>
        </ViewTabs>
      </Center>
      <Panel>
        <PanelTitle>Properties: View properties<TitleRule /></PanelTitle>
        <PanelTabs>
          {PANEL_TABS.map((k, i) => <PanelTab key={k} $active={i === 0}><Icon k={k} s={18} /></PanelTab>)}
        </PanelTabs>
        <SubTabs>
          <SubTab $active><Icon k="camera" s={21} /></SubTab>
          <SubTab><Icon k="frame" s={21} /></SubTab>
        </SubTabs>
        <Heading $first>Viewport</Heading>
        <PropRow label="Title" value="Top" />
        <PropRow label="Width" value="2294" dim />
        <PropRow label="Height" value="1478" dim />
        <Row>
          <Label>Projection</Label>
          <PickField>Parallel<PickButton><svg width="8" height="5"><path d="M1 1l3 3 3-3" fill="none" stroke="#666" /></svg></PickButton></PickField>
        </Row>
        <Row><Label>Locked</Label><Value $plain><Check /></Value></Row>
        <Heading>Camera</Heading>
        <PropRow label="Lens Length(m..." value="50.0" dim />
        <PropRow label="Rotation" value="0.0" />
        <PropRow label="X Location" value="-32.522" />
        <PropRow label="Y Location" value="-16.169" />
        <PropRow label="Z Location" value="130.22" />
        <PropRow label="Distance to Tar..." value="130.220" plain dim />
        <Row><Label>Location</Label><PlaceButton>Place...</PlaceButton></Row>
        <Heading>Target</Heading>
        <PropRow label="X Target" value="-32.522" />
        <PropRow label="Y Target" value="-16.169" />
        <PropRow label="Z Target" value="0.0" />
        <Row><Label>Location</Label><PlaceButton>Place...</PlaceButton></Row>
        <Heading>Wallpaper</Heading>
        <Row>
          <Label>Filename</Label>
          <PickField>(none)<PickButton>...</PickButton></PickField>
        </Row>
        <Row><Label>Show</Label><Value $plain><Check on /></Value></Row>
        <Row><Label>Gray</Label><Value $plain><Check on /></Value></Row>
      </Panel>
    </Body>
    <OsnapRow>
      {OSNAPS.map(([t, on, gap]) => (
        <OsnapItem key={t} $gap={gap}><Check on={!!on} white />{t}</OsnapItem>
      ))}
    </OsnapRow>
    <StatusBar>
      {STATUS.map(s => <StatusCell key={s.t} $w={s.w} $line={s.line} $left={s.left}>{s.t}</StatusCell>)}
      <StatusCell $w={142} $left><Swatch />Default</StatusCell>
      {TOGGLES.map(s => <StatusCell key={s.t} $w={s.w} $on={s.on} $off={s.off}>{s.t}</StatusCell>)}
      <StatusCell $w={90} $left>CPU use: 0.7 %</StatusCell>
    </StatusBar>
  </Window>
);

export default App;
